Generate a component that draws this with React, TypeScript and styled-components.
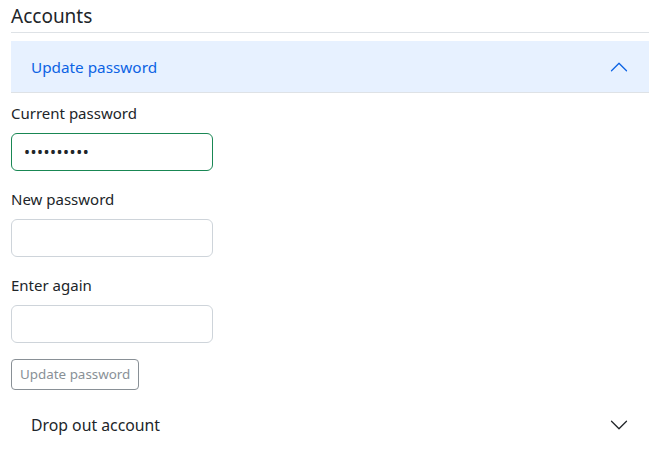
import React from 'react';
import styled, { createGlobalStyle } from 'styled-components';

const GlobalStyle = createGlobalStyle`
  body {
    margin: 0;
    background: #fff;
    font-family: "Noto Sans", "Liberation Sans", sans-serif;
    color: #212529;
  }
`;

const Page = styled.div`
  padding: 0 11px;
`;

const Title = styled.h2`
  margin: 0 0 8px;
  font-size: 19px;
  font-weight: 400;
  line-height: 32px;
  height: 32px;
  border-bottom: 1px solid #dee2e6;
  display: flex;
  align-items: center;
`;

const AccordionHeader = styled.button<{ $open?: boolean }>`
  display: flex;
  width: 100%;
  height: 52px;
  align-items: center;
  justify-content: space-between;
  padding: 0 20px;
  border: 0;
  font-family: inherit;
  font-size: ${({ $open }) => ($open ? '15.3px' : '15.8px')};
  text-align: left;
  cursor: pointer;
  color: ${({ $open }) => ($open ? '#0c63e4' : '#212529')};
  background: ${({ $open }) => ($open ? '#e7f1ff' : '#fff')};
  box-shadow: ${({ $open }) => ($open ? 'inset 0 -1px 0 #dee2e6' : 'none')};
`;

const Chevron = styled.svg<{ $open?: boolean }>`
  width: 20px;
  height: 20px;
  transform: ${({ $open }) => ($open ? 'rotate(-180deg)' : 'none')};
`;

const AccordionBody = styled.div`
  padding: 8px 0 9px;
`;

const Field = styled.div`
  margin-bottom: 16px;
`;

const Label = styled.label`
  display: block;
  font-size: 15px;
  line-height: 24px;
  margin-bottom: 8px;
`;

const Input = styled.input<{ $focused?: boolean }>`
  box-sizing: border-box;
  display: block;
  width: 202px;
  height: 38px;
  padding: 6px 12px;
  font-size: 16px;
  font-family: inherit;
  color: #212529;
  border: 1px solid ${({ $focused }) => ($focused ? '#198754' : '#ced4da')};
  border-radius: 6px;
  outline: none;
  letter-spacing: 0.5px;
`;

const SmallButton = styled.button`
  box-sizing: border-box;
  height: 31px;
  padding: 4px 8px;
  font-family: inherit;
  font-size: 13.4px;
  line-height: 21px;
  color: #6c757d;
  background: transparent;
  border: 1px solid #6c757d;
  border-radius: 4px;
  opacity: 0.8;
`;

const ChevronIcon: React.FC<{ open?: boolean; color: string }> = ({ open, color }) => (
  <Chevron $open={open} viewBox="0 0 16 16" fill={color}>
    <path
      fillRule="evenodd"
      d="M1.646 4.646a.5.5 0 0 1 .708 0L8 10.293l5.646-5.647a.5.5 0 0 1 .708.708l-6 6a.5.5 0 0 1-.708 0l-6-6a.5.5 0 0 1 0-.708z"
    />
  </Chevron>
);

export default function App() {
  return (
    <Page>
      <GlobalStyle />
      <Title>Accounts</Title>

      <AccordionHeader $open>
        <span>Update password</span>
        <ChevronIcon open color="#0c63e4" />
      </AccordionHeader>
      <AccordionBody>
        <Field>
          <Label>Current password</Label>
          <Input type="password" defaultValue="password12" $focused />
        </Field>
        <Field>
          <Label>New password</Label>
          <Input type="password" />
        </Field>
        <Field>
          <Label>Enter again</Label>
          <Input type="password" />
        </Field>
        <SmallButton disabled>Update password</SmallButton>
      </AccordionBody>

      <AccordionHeader>
        <span>Drop out account</span>
        <ChevronIcon color="#212529" />
      </AccordionHeader>
    </Page>
  );
}
